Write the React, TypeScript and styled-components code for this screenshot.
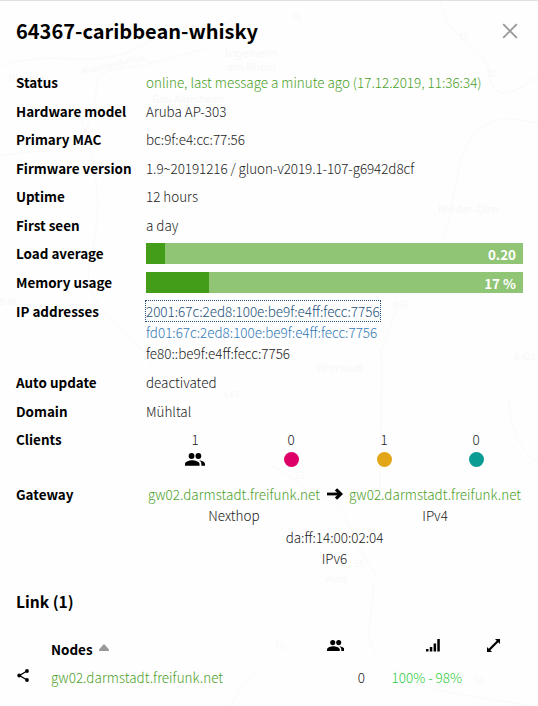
import React from "react";
import styled, { createGlobalStyle } from "styled-components";

const GlobalStyle = createGlobalStyle`
  * { box-sizing: border-box; }
  body { margin: 0; background: #fefefe; }
`;

const Panel = styled.main`
  position: relative;
  width: 538px;
  height: 706px;
  overflow: hidden;
  padding: 0 15px 0 16px;
  border-top: 1px solid #e0e0e0;
  background: #fefefe;
  color: #222;
  font-family: "Noto Sans CJK SC", "Noto Sans", sans-serif;
  font-size: 13.43px;
  font-weight: 300;
  line-height: 21.43px;
  font-kerning: normal;
`;

const MapBackdrop = styled.svg`
  position: absolute;
  inset: 0;
  pointer-events: none;
  font-family: "Noto Sans", sans-serif;
  font-weight: 400;
`;

const Content = styled.div`
  position: relative;
`;

const Header = styled.header`
  display: flex;
  justify-content: space-between;
  align-items: center;
  height: 60px;
  margin-bottom: 7.55px;
`;

const Title = styled.h2`
  margin: 0;
  color: #000;
  font-size: 20px;
  font-weight: 700;
  white-space: nowrap;
`;

const CloseButton = styled.button`
  display: flex;
  margin-right: 5px;
  padding: 0;
  border: 0;
  background: none;
`;

const Row = styled.div`
  display: grid;
  grid-template-columns: 130px 377px;
  padding: 3.57px 0;
`;

const Label = styled.div`
  color: #000;
  font-weight: 700;
  white-space: nowrap;
`;

const Value = styled.div<{ $tracking?: number }>`
  white-space: nowrap;
  letter-spacing: ${(p) => p.$tracking ?? 0}px;
`;

const Line = styled.div`
  height: 21.43px;
`;

const NodeLink = styled.a<{ $tone?: string }>`
  color: ${(p) => p.$tone ?? "#4ba128"};
`;

const GatewayLink = styled(NodeLink)`
  letter-spacing: 0.04px;
`;

const FocusedLink = styled(NodeLink)`
  outline: 1px dotted #23527c;
`;

const Meter = styled.div`
  height: 21px;
  display: flex;
  background: #90c576;
`;

const MeterFill = styled.div<{ $width: number }>`
  width: ${(p) => p.$width}px;
  background: #449d19;
`;

const MeterText = styled.span`
  margin-left: auto;
  margin-right: 7px;
  padding-top: 1px;
  color: #fff;
  font-weight: 700;
`;

const Clients = styled.div`
  display: grid;
  grid-template-columns: 98px 94px 92px 92px;
  height: 47.7px;
`;

const ClientCell = styled.div`
  display: flex;
  flex-direction: column;
  align-items: center;
  gap: 1px;
`;

const PeopleSlot = styled.span`
  display: flex;
  padding-top: 1.5px;
`;

const Dot = styled.span<{ $color: string }>`
  width: 15px;
  height: 15px;
  margin-top: 0.3px;
  border-radius: 50%;
  background: ${(p) => p.$color};
`;

const Gateways = styled.div`
  display: flex;
  justify-content: center;
  text-align: center;
`;

const ArrowSlot = styled.div`
  display: flex;
  justify-content: center;
  width: 29px;
  padding-top: 4px;
`;

const Centered = styled.div`
  text-align: center;
`;

const SectionTitle = styled.h3`
  margin: 16px 0 22px;
  color: #000;
  font-size: 15.6px;
  font-weight: 700;
  line-height: 24px;
`;

const LinkRow = styled.div`
  display: grid;
  grid-template-columns: 35px 250px 64px 97px 61px;
  height: 28.6px;
  align-items: center;
  white-space: nowrap;
`;

const HeadCell = styled.div`
  display: flex;
  align-items: center;
  gap: 6px;
  color: #000;
  font-weight: 700;
`;

const HeadIcon = styled.div<{ $right: number }>`
  display: flex;
  justify-content: flex-end;
  padding: 0 ${(p) => p.$right}px 8px 0;
`;

const ShareSlot = styled.div`
  display: flex;
  padding: 0 0 5px 1px;
`;

const Num = styled.div<{ $tone?: string }>`
  text-align: right;
  color: ${(p) => p.$tone ?? "#222"};
`;

const People = ({ w }: { w: number }) => (
  <svg width={w} height={(w * 14) / 22} viewBox="1 5 22 14" fill="#000">
    <path d="M16.500 13C18.040 14.060 19 15.320 19 17v2h4v-2c0-2.180-3.570-3.700-6.500-4z" />
    <circle cx="8.200" cy="8.300" r="3.200" />
    <circle cx="15.700" cy="8.300" r="3.200" />
    <path d="M8.800 13C6.200 13 1 14.300 1 17v2h16v-2c0-2.700-5.400-4-8.200-4z" />
  </svg>
);

const roads = [
  "M0 65C60 45 95 75 150 40S200 50 240 10",
  "M0 155C50 145 75 160 90 120S80 70 140 65L205 48",
  "M440 0C450 45 485 40 490 75S530 80 538 75",
  "M443 240C460 180 455 150 478 130S520 120 538 122",
  "M380 490C380 420 383 380 381 350L400 300",
  "M268 462C290 475 310 490 330 500S350 540 380 580",
  "M82 120C100 180 102 210 90 260S130 320 155 370",
  "M509 400C512 450 538 460 538 462",
  "M374 580C370 640 360 640 390 665S440 690 538 706",
  "M230 706C240 685 255 670 270 655",
];

const places: [string, number, number, number][] = [
  ["Bingen", 8, 81, 11], ["Ingelheim", 225, 56, 11], ["am Rhein", 227, 70, 11],
  ["Gau-Algesheim", 152, 102, 10], ["Nieder-Olm", 438, 212, 11], ["B 48", 0, 304, 8],
  ["A 63", 393, 307, 8], ["B 420", 514, 359, 8], ["Wörrstadt", 316, 371, 10],
  ["A 61", 223, 397, 8], ["Alzey", 326, 581, 9], ["20", 487, 76, 8], ["19", 459, 39, 8],
  ["16", 292, 19, 8], ["53", 295, 478, 8], ["55", 355, 566, 8], ["56", 475, 683, 8], ["10", 275, 648, 8],
];

const basics: [string, string, number?][] = [
  ["Hardware model", "Aruba AP-303"],
  ["Primary MAC", "bc:9f:e4:cc:77:56"],
  ["Firmware version", "1.9~20191216 / gluon-v2019.1-107-g6942d8cf", -0.07],
  ["Uptime", "12 hours"],
  ["First seen", "a day"],
];

export default function App() {
  return (
    <Panel>
      <GlobalStyle />
      <MapBackdrop width="538" height="706" aria-hidden="true">
        {roads.map((d) => (
          <path key={d} d={d} fill="none" stroke="#fbf9f9" />
        ))}
        {places.map(([name, x, y, size]) => (
          <text key={name} x={x} y={y} fontSize={size} fill="#f8f7f8">{name}</text>
        ))}
        <text x="82" y="74" fontSize="9" fill="#f8f7f8" transform="rotate(-13 82 74)">Rheinland-Pfalz</text>
      </MapBackdrop>
      <Content>
        <Header>
          <Title>64367-caribbean-whisky</Title>
          <CloseButton aria-label="Close">
            <svg width="16" height="16" viewBox="0 0 16 16" stroke="#999" strokeWidth="1.9">
              <path d="M1.200 1.200 14.800 14.800M14.800 1.200 1.200 14.800" />
            </svg>
          </CloseButton>
        </Header>
        <Row>
          <Label>Status</Label>
          <Value><NodeLink>online, last message a minute ago (17.12.2019, 11:36:34)</NodeLink></Value>
        </Row>
        {basics.map(([k, v, tracking]) => (
          <Row key={k}><Label>{k}</Label><Value $tracking={tracking}>{v}</Value></Row>
        ))}
        <Row>
          <Label>Load average</Label>
          <Meter><MeterFill $width={19} /><MeterText>0.20</MeterText></Meter>
        </Row>
        <Row>
          <Label>Memory usage</Label>
          <Meter><MeterFill $width={63} /><MeterText>17 %</MeterText></Meter>
        </Row>
        <Row>
          <Label>IP addresses</Label>
          <Value>
            <Line><FocusedLink $tone="#23527c">2001:67c:2ed8:100e:be9f:e4ff:fecc:7756</FocusedLink></Line>
            <Line><NodeLink $tone="#337ab7">fd01:67c:2ed8:100e:be9f:e4ff:fecc:7756</NodeLink></Line>
            <Line>fe80::be9f:e4ff:fecc:7756</Line>
          </Value>
        </Row>
        <Row><Label>Auto update</Label><Value>deactivated</Value></Row>
        <Row><Label>Domain</Label><Value>Mühltal</Value></Row>
        <Row>
          <Label>Clients</Label>
          <Clients>
            <ClientCell><span>1</span><PeopleSlot><People w={20} /></PeopleSlot></ClientCell>
            <ClientCell><span>0</span><Dot $color="#dc0067" /></ClientCell>
            <ClientCell><span>1</span><Dot $color="#e3a619" /></ClientCell>
            <ClientCell><span>0</span><Dot $color="#0a9c92" /></ClientCell>
          </Clients>
        </Row>
        <Row>
          <Label>Gateway</Label>
          <Value>
            <Gateways>
              <div><GatewayLink>gw02.darmstadt.freifunk.net</GatewayLink><Line>Nexthop</Line></div>
              <ArrowSlot>
                <svg width="16" height="12" viewBox="0 0 16 12" fill="none" stroke="#000" strokeWidth="2.8">
                  <path d="M0 6H14" />
                  <path d="M9 1.300 13.800 6 9 10.700" strokeWidth="3.200" />
                </svg>
              </ArrowSlot>
              <div><GatewayLink>gw02.darmstadt.freifunk.net</GatewayLink><Line>IPv4</Line></div>
            </Gateways>
            <Centered>da:ff:14:00:02:04</Centered>
            <Centered>IPv6</Centered>
          </Value>
        </Row>
        <SectionTitle>Link (1)</SectionTitle>
        <LinkRow>
          <span />
          <HeadCell>
            Nodes
            <svg width="10" height="11" viewBox="0 0 10 11"><path d="M5 0 10 5.500V7H0V5.500z" fill="#999" /></svg>
          </HeadCell>
          <HeadIcon $right={21}><People w={17.500} /></HeadIcon>
          <HeadIcon $right={22}>
            <svg width="14" height="13" viewBox="0 0 14 13">
              <path d="M0 10h2.500v2.500H0zM3.800 8h2.500v4.500H3.800zM7.600 4.500h2.500v8H7.600zM11.300 0h2.500v12.500h-2.500z" />
            </svg>
          </HeadIcon>
          <HeadIcon $right={23}>
            <svg width="13" height="13" viewBox="0 0 13 13">
              <path d="M8 0H13V5L11.300 3.300 3.300 11.300 5 13H0V8L1.700 9.700 9.700 1.700z" />
            </svg>
          </HeadIcon>
        </LinkRow>
        <LinkRow>
          <ShareSlot>
            <svg width="13" height="13" viewBox="0 0 13 13">
              <path d="M10 2 2.500 6.500 10 11" fill="none" stroke="#000" strokeWidth="1.300" />
              <circle cx="10" cy="2" r="1.900" /><circle cx="2.200" cy="6.500" r="1.900" /><circle cx="10" cy="11" r="1.900" />
            </svg>
          </ShareSlot>
          <GatewayLink>gw02.darmstadt.freifunk.net</GatewayLink>
          <Num>0</Num>
          <Num $tone="#2ecc40">100% - 98%</Num>
          <span />
        </LinkRow>
      </Content>
    </Panel>
  );
}
